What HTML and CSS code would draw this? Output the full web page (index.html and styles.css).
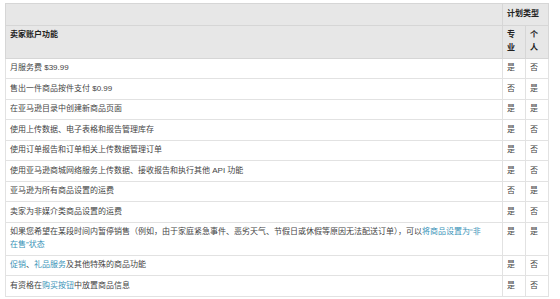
FILE: index.html
```html
<!DOCTYPE html>
<html lang="zh">
<head>
<meta charset="utf-8">
<link rel="stylesheet" href="styles.css">
</head>
<body>
<table class="plans">
  <colgroup>
    <col class="c-feature">
    <col class="c-plan">
    <col class="c-plan">
  </colgroup>
  <thead>
    <tr class="h1">
      <th></th>
      <th colspan="2">计划类型</th>
    </tr>
    <tr class="h2">
      <th>卖家账户功能</th>
      <th>专业</th>
      <th>个人</th>
    </tr>
  </thead>
  <tbody>
    <tr><td>月服务费 $39.99</td><td>是</td><td>否</td></tr>
    <tr><td>售出一件商品按件支付 $0.99</td><td>否</td><td>是</td></tr>
    <tr><td>在亚马逊目录中创建新商品页面</td><td>是</td><td>是</td></tr>
    <tr><td>使用上传数据、电子表格和报告管理库存</td><td>是</td><td>否</td></tr>
    <tr><td>使用订单报告和订单相关上传数据管理订单</td><td>是</td><td>否</td></tr>
    <tr><td>使用亚马逊商城网络服务上传数据、接收报告和执行其他 API 功能</td><td>是</td><td>否</td></tr>
    <tr><td>亚马逊为所有商品设置的运费</td><td>否</td><td>是</td></tr>
    <tr><td>卖家为非媒介类商品设置的运费</td><td>是</td><td>否</td></tr>
    <tr><td>如果您希望在某段时间内暂停销售（例如，由于家庭紧急事件、恶劣天气、节假日或休假等原因无法配送订单），可以<a href="#">将商品设置为“非<span class="keep">在售”状态</span></a></td><td>是</td><td>是</td></tr>
    <tr><td><a href="#">促销</a>、<a href="#">礼品服务</a>及其他特殊的商品功能</td><td>是</td><td>否</td></tr>
    <tr><td>有资格在<a href="#">购买按钮</a>中放置商品信息</td><td>是</td><td>否</td></tr>
  </tbody>
</table>
</body>
</html>
```
FILE: styles.css
```css
html, body {
  margin: 0;
  padding: 0;
  background: #ffffff;
}

body {
  padding: 3px 0 0 5px;
  font-family: "Liberation Sans", "Noto Sans CJK SC", sans-serif;
  font-size: 8px;
  color: #444;
}

.plans {
  border-collapse: collapse;
  width: 543px;
  table-layout: fixed;
  border: 1px solid #dcdcdc;
}

.c-feature { width: 497px; }
.c-plan { width: 23px; }

.plans th,
.plans td {
  border: 1px solid #e2e2e2;
  padding: 3.5px 4px;
  line-height: 12.5px;
  text-align: left;
  vertical-align: top;
}

.plans thead th {
  background: #e7e7e7;
  color: #222;
  font-weight: bold;
  border-color: #d6d6d6;
}

.plans .h1 th {
  padding-top: 4px;
  padding-bottom: 4px;
}

.plans td {
  background: #fff;
}

.plans a {
  color: #3a93b8;
  text-decoration: none;
}

.keep {
  white-space: nowrap;
}
```
